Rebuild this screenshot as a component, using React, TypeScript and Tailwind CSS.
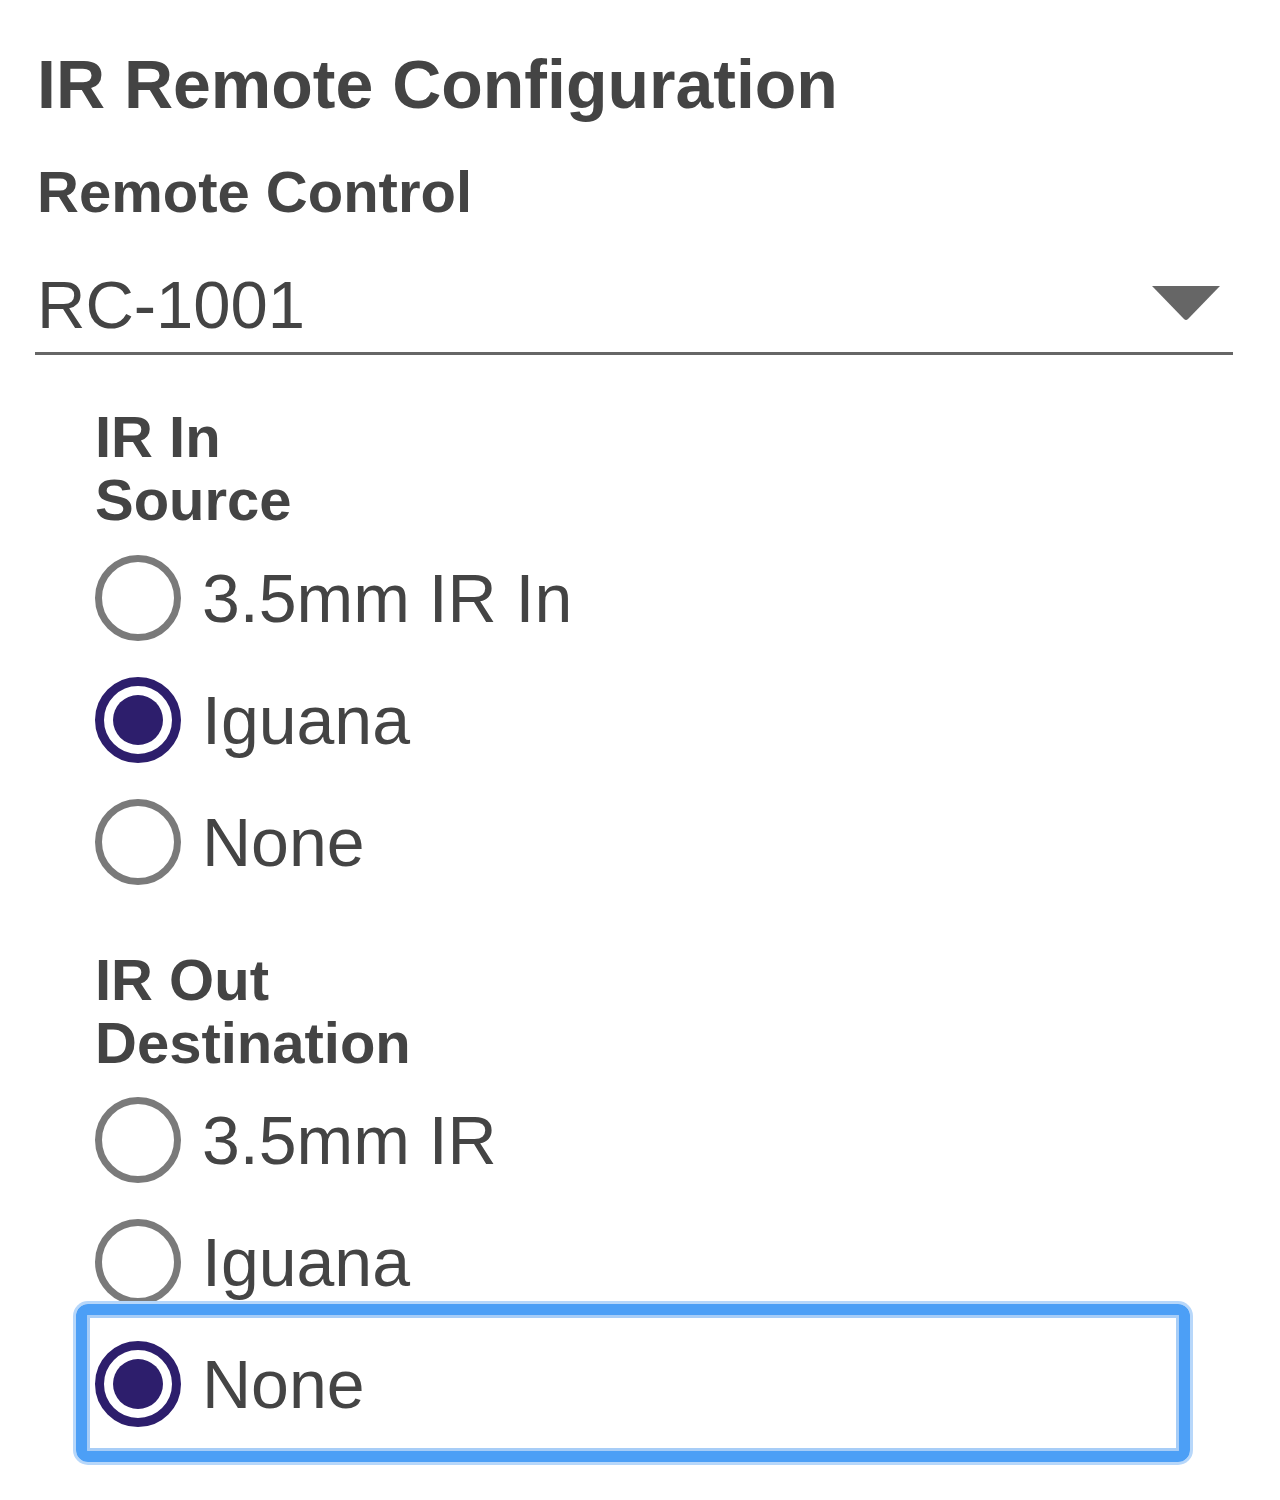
import React from "react";

function Radio({ checked, label, focused }: { checked?: boolean; label: string; focused?: boolean }) {
  return (
    <div className="relative flex h-[122px] items-center">
      {focused && (
        <div className="pointer-events-none absolute left-[-19px] right-[43px] top-[-19px] bottom-[-17px] rounded-[12px] border-[11px] border-[#4c9ff6] shadow-[0_0_0_3px_#b7d7fa,inset_0_0_0_3px_#a7cdf7]" />
      )}
      {checked ? (
        <div className="relative flex h-[86px] w-[86px] shrink-0 items-center justify-center rounded-full border-[9px] border-[#2d1e6c] bg-white">
          <div className="h-[50px] w-[50px] rounded-full bg-[#2d1e6c]" />
        </div>
      ) : (
        <div className="relative h-[86px] w-[86px] shrink-0 rounded-full border-[7px] border-[#7a7a7a] bg-white" />
      )}
      <span className="relative ml-[21px] text-[68px] leading-[74px] text-[#444444]">{label}</span>
    </div>
  );
}

export default function App() {
  return (
    <div
      className="min-h-[1500px] w-[1280px] bg-white pl-[35px] pr-[47px] pt-[45px] text-[#444444]"
      style={{ fontFamily: '"Liberation Sans", Arial, sans-serif' }}
    >
      <h1 className="pl-[2px] text-[68px] font-bold leading-[78px]">IR Remote Configuration</h1>
      <div className="mt-[36px] pl-[2px] text-[58px] font-bold leading-[66px]">Remote Control</div>
      <div className="mt-[43px] flex items-start justify-between border-b-[3px] border-[#666666] pb-[10px]">
        <span className="pl-[2px] text-[67px] leading-[74px]">RC-1001</span>
        <svg width="72" height="36" viewBox="0 0 72 36" className="mr-[11px] mt-[17px]">
          <path d="M2 1 L70 1 L38 34 Q36 36 34 34 Z" fill="#666666" />
        </svg>
      </div>

      <div className="pl-[60px]">
        <div className="mt-[50px] text-[58px] font-bold leading-[63px]">
          IR In
          <br />
          Source
        </div>
        <div className="mt-[6px]">
          <Radio label="3.5mm IR In" />
          <Radio label="Iguana" checked />
          <Radio label="None" />
        </div>

        <div className="mt-[45px] text-[58px] font-bold leading-[63px]">
          IR Out
          <br />
          Destination
        </div>
        <div className="mt-[5px]">
          <Radio label="3.5mm IR" />
          <Radio label="Iguana" />
          <Radio label="None" checked focused />
        </div>
      </div>
    </div>
  );
}
